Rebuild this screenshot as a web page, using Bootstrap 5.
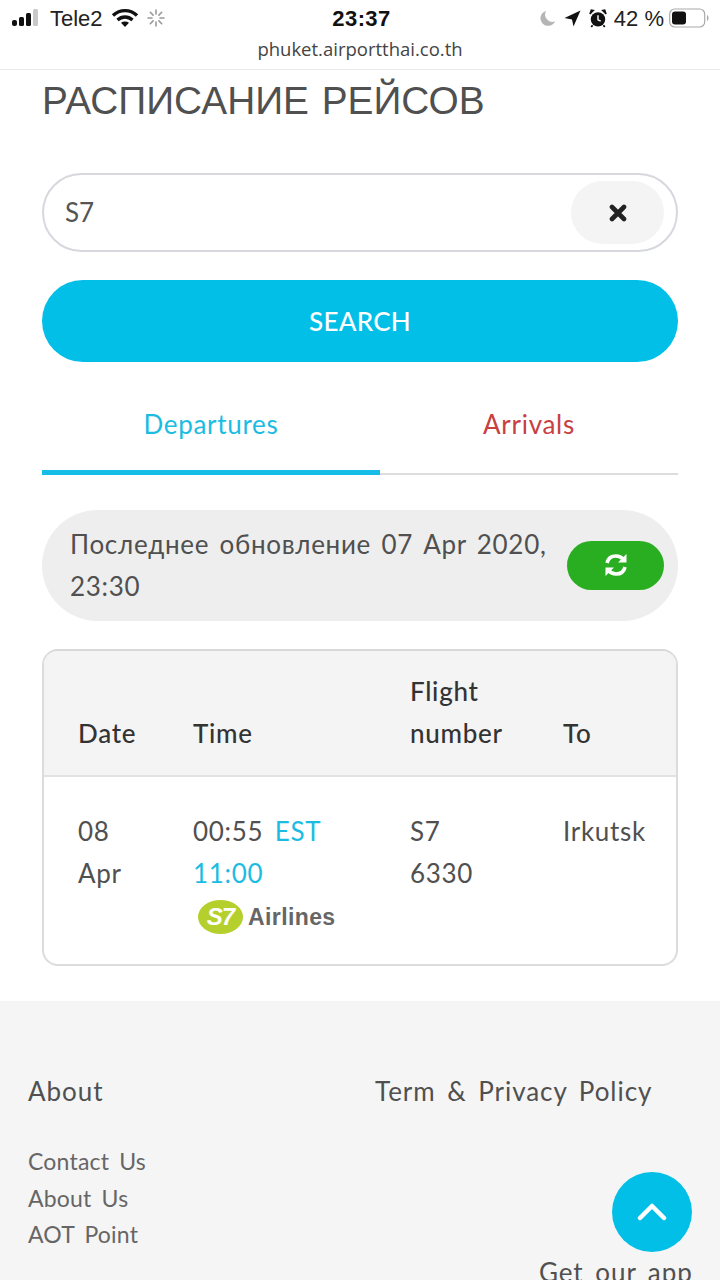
<!DOCTYPE html>
<html lang="ru">
<head>
<meta charset="utf-8">
<title>Flight schedule</title>
<link href="https://cdn.jsdelivr.net/npm/bootstrap@5.3.0/dist/css/bootstrap.min.css" rel="stylesheet">
<style>
html,body{height:1280px;overflow:hidden}
body{font-family:"Lato","Noto Sans",sans-serif;color:#505050;background:#fff;word-spacing:4px;letter-spacing:.7px;position:relative}
.phone-top{height:70px;border-bottom:1px solid #e9e9e9;font-family:"Liberation Sans",sans-serif;word-spacing:0;letter-spacing:0;color:#222}
.status-row{height:36px;padding:0 9px 0 12px;font-size:22px}
.status-time{font-weight:700;font-size:22px;letter-spacing:.4px;color:#111}
.status-side{width:300px}
.status-pct{margin:0 -3px 0 -1px}
.site-url{font-family:"Open Sans",sans-serif;font-size:18.500px;line-height:26px;text-align:center;color:#444}
.page-main{padding:0 42px 35px}
.page-title{font-family:"Liberation Sans",sans-serif;font-size:38.800px;font-weight:400;line-height:46px;margin:8px 0 0;color:#505050;word-spacing:2px;letter-spacing:0}
.search-box{height:79px;margin-top:49px;border:2px solid #d6d8dd;border-radius:40px;padding:6px 12px 6px 21px}
.search-val{font-size:26px;color:#555;letter-spacing:0}
.clear-btn{width:93px;height:63px;border:0;border-radius:32px;background:#f4f4f4}
.search-btn{display:block;width:100%;height:82px;margin-top:28px;border:0;border-radius:41px;background:#02bfe7;color:#fff;font-size:26px;font-weight:500;letter-spacing:.3px}
.tab-row{margin-top:40px;height:73px;border-bottom:2px solid #ddd;font-size:26px}
.tab-a{width:338px;height:73px;color:#1cbce2;border-bottom:5px solid #16bde6;margin-bottom:-2px;text-align:center;line-height:44px}
.tab-b{flex:1;color:#c8403f;text-align:center;line-height:44px}
.update-bar{margin-top:35px;height:111px;border-radius:56px;background:#eee;padding:13px 14px 14px 28px;font-size:26px;line-height:42px;word-spacing:3px}
.update-text{width:490px}
.refresh-btn{width:97px;height:49px;border:0;border-radius:25px;background:#2aae21}
.flight-card{margin-top:28px;height:317px;border:2px solid #dcdcdc;border-top-color:#d8d8d8;border-radius:16px;overflow:hidden;font-size:26px;line-height:42px}
.flight-table{width:100%;table-layout:fixed;margin:0;color:#505050}
.flight-table th{height:125px;vertical-align:bottom;background:#f4f4f4;border-bottom:2px solid #e2e2e2;font-weight:500;color:#333;padding:0 0 21px 0}
.flight-table td{vertical-align:top;padding:33px 0 0;border:0}
.c1{width:149px;padding-left:34px!important}.c2{width:217px}.c3{width:153px}
.flight-table td.c1{padding-right:34px}
.flight-table td.c2{padding-right:24px}
.flight-table td.c3{padding-right:50px}
.accent{color:#1cbce2}
.air-logo{display:flex;align-items:center;gap:5px;margin:5px 0 0 5px;height:36px;font-family:"Liberation Sans",sans-serif;font-weight:700;font-size:23px;color:#666;line-height:1;word-spacing:0;letter-spacing:.4px}
.s7-mark{width:45px;height:34px;border-radius:50%;background:#b5cf2c;color:#fff;font-style:italic;font-weight:700;font-size:24px;line-height:34px;text-align:center;letter-spacing:-1px}
.page-foot{background:#f5f5f5;height:300px;padding:69px 0 0 28px;font-size:26px;line-height:42px;letter-spacing:.95px}
.foot-left{width:347px}
.foot-links{margin-top:31px;font-size:23px;line-height:36.500px;letter-spacing:.2px;color:#666}
.foot-links a{display:block;color:#666;text-decoration:none}
.app-label{position:absolute;left:539px;top:1251px;font-size:26px;line-height:42px;letter-spacing:.95px;white-space:nowrap}
.to-top{position:absolute;left:612px;top:1172px;width:80px;height:80px;border:0;border-radius:50%;background:#02bfe7}
</style>
</head>
<body>
<header class="phone-top">
  <div class="status-row d-flex align-items-center justify-content-between">
    <div class="status-side d-flex align-items-center gap-2">
      <svg width="30" height="20" viewBox="0 0 30 20"><g fill="#111"><rect x="0" y="12" width="5" height="6" rx="2"/><rect x="7" y="9" width="5" height="9" rx="1.5"/><rect x="14" y="5" width="5" height="13" rx="1.5"/></g><rect x="21" y="1" width="5" height="17" rx="1.5" fill="#c9c9c9"/></svg>
      <span>Tele2</span>
      <svg width="28" height="20" viewBox="0 0 28 20" fill="none" stroke="#111" stroke-width="3.4"><path d="M2 7.5C9 1 19 1 26 7.5"/><path d="M6.5 12c4.500-4 10.500-4 15 0"/><path d="M14 19l-4-4.200c2.300-1.700 5.700-1.700 8 0z" fill="#111" stroke="none"/></svg>
      <svg width="18" height="18" viewBox="0 0 18 18" stroke="#999" stroke-width="1.600" stroke-linecap="round"><path d="M9 1v4M9 13v4M1 9h4M13 9h4M3.300 3.300l2.800 2.800M11.900 11.900l2.800 2.800M3.300 14.700l2.800-2.800M11.900 6.100l2.800-2.800"/></svg>
    </div>
    <div class="status-time">23:37</div>
    <div class="status-side d-flex align-items-center justify-content-end gap-2">
      <svg width="17" height="17" viewBox="0 0 19 19"><path d="M8 1a8.500 8.500 0 1 0 10 11.500A8 8 0 0 1 8 1z" fill="#b5b5b5"/></svg>
      <svg width="17" height="17" viewBox="0 0 17 17"><path d="M16.500.5 9.500 16.500l-1.500-7-7.500-1.500z" fill="#111"/></svg>
      <svg width="18" height="19" viewBox="0 0 20 21"><circle cx="10" cy="11.500" r="8" fill="#111"/><path d="M10 7v5l3 1.500" fill="none" stroke="#fff" stroke-width="1.600"/><path d="M1 5.500 5 1.500 2.500 1zM19 5.500 15 1.500 17.500 1z" fill="#111" stroke="#111" stroke-width="1.500"/><path d="M4 18l-1.500 2M16 18l1.500 2" stroke="#111" stroke-width="2"/></svg>
      <span class="status-pct">42&nbsp;%</span>
      <svg width="42" height="20" viewBox="0 0 42 20"><rect x=".7" y="1" width="35" height="18" rx="5" fill="none" stroke="#aaa" stroke-width="1.200"/><rect x="3" y="3.500" width="14" height="13" rx="3" fill="#111"/><path d="M38 7c2 .5 2 5.500 0 6z" fill="#aaa"/></svg>
    </div>
  </div>
  <div class="site-url">phuket.airportthai.co.th</div>
</header>

<main class="page-main">
  <h1 class="page-title">РАСПИСАНИЕ РЕЙСОВ</h1>

  <div class="search-box d-flex align-items-center justify-content-between">
    <span class="search-val">S7</span>
    <button class="clear-btn d-flex align-items-center justify-content-center" type="button" aria-label="Clear">
      <svg width="18" height="18" viewBox="0 0 18 18" stroke="#222" stroke-width="4.600" stroke-linecap="round"><path d="M3 3l12 12M15 3 3 15"/></svg>
    </button>
  </div>

  <button class="search-btn" type="button">SEARCH</button>

  <div class="tab-row d-flex">
    <div class="tab-a">Departures</div>
    <div class="tab-b">Arrivals</div>
  </div>

  <div class="update-bar d-flex align-items-center justify-content-between">
    <div class="update-text">Последнее обновление 07 Apr 2020, 23:30</div>
    <button class="refresh-btn d-flex align-items-center justify-content-center" type="button" aria-label="Refresh">
      <svg width="26" height="26" viewBox="0 0 26 26" fill="none" stroke="#fff" stroke-width="3.600"><path d="M4 11c1-4.500 4.500-7 9-7 3 0 5.500 1.200 7.500 3.500"/><path d="M22 15c-1 4.500-4.500 7-9 7-3 0-5.500-1.200-7.500-3.500"/><path d="M23.500 2v8.500H15z" fill="#fff" stroke="none"/><path d="M2.500 24v-8.500H11z" fill="#fff" stroke="none"/></svg>
    </button>
  </div>

  <div class="flight-card">
    <table class="table flight-table">
      <thead>
        <tr><th class="c1">Date</th><th class="c2">Time</th><th class="c3">Flight number</th><th>To</th></tr>
      </thead>
      <tbody>
        <tr>
          <td class="c1">08 Apr</td>
          <td class="c2">00:55 <span class="accent">EST 11:00</span>
            <div class="air-logo">
              <span class="s7-mark">S7</span>
              <span>Airlines</span>
            </div>
          </td>
          <td class="c3">S7 6330</td>
          <td>Irkutsk</td>
        </tr>
      </tbody>
    </table>
  </div>
</main>

<footer class="page-foot d-flex">
  <div class="foot-left">
    <div>About</div>
    <div class="foot-links"><a href="#">Contact Us</a><a href="#">About Us</a><a href="#">AOT Point</a></div>
  </div>
  <div>Term &amp; Privacy Policy</div>
</footer>
<div class="app-label">Get our app</div>
<button class="to-top d-flex align-items-center justify-content-center" type="button" aria-label="Back to top">
  <svg width="30" height="20" viewBox="0 0 30 20" fill="none" stroke="#fff" stroke-width="4.500" stroke-linecap="round" stroke-linejoin="round"><path d="M3 16 15 4l12 12"/></svg>
</button>
<script src="https://cdn.jsdelivr.net/npm/bootstrap@5.3.0/dist/js/bootstrap.bundle.min.js"></script>
</body>
</html>
